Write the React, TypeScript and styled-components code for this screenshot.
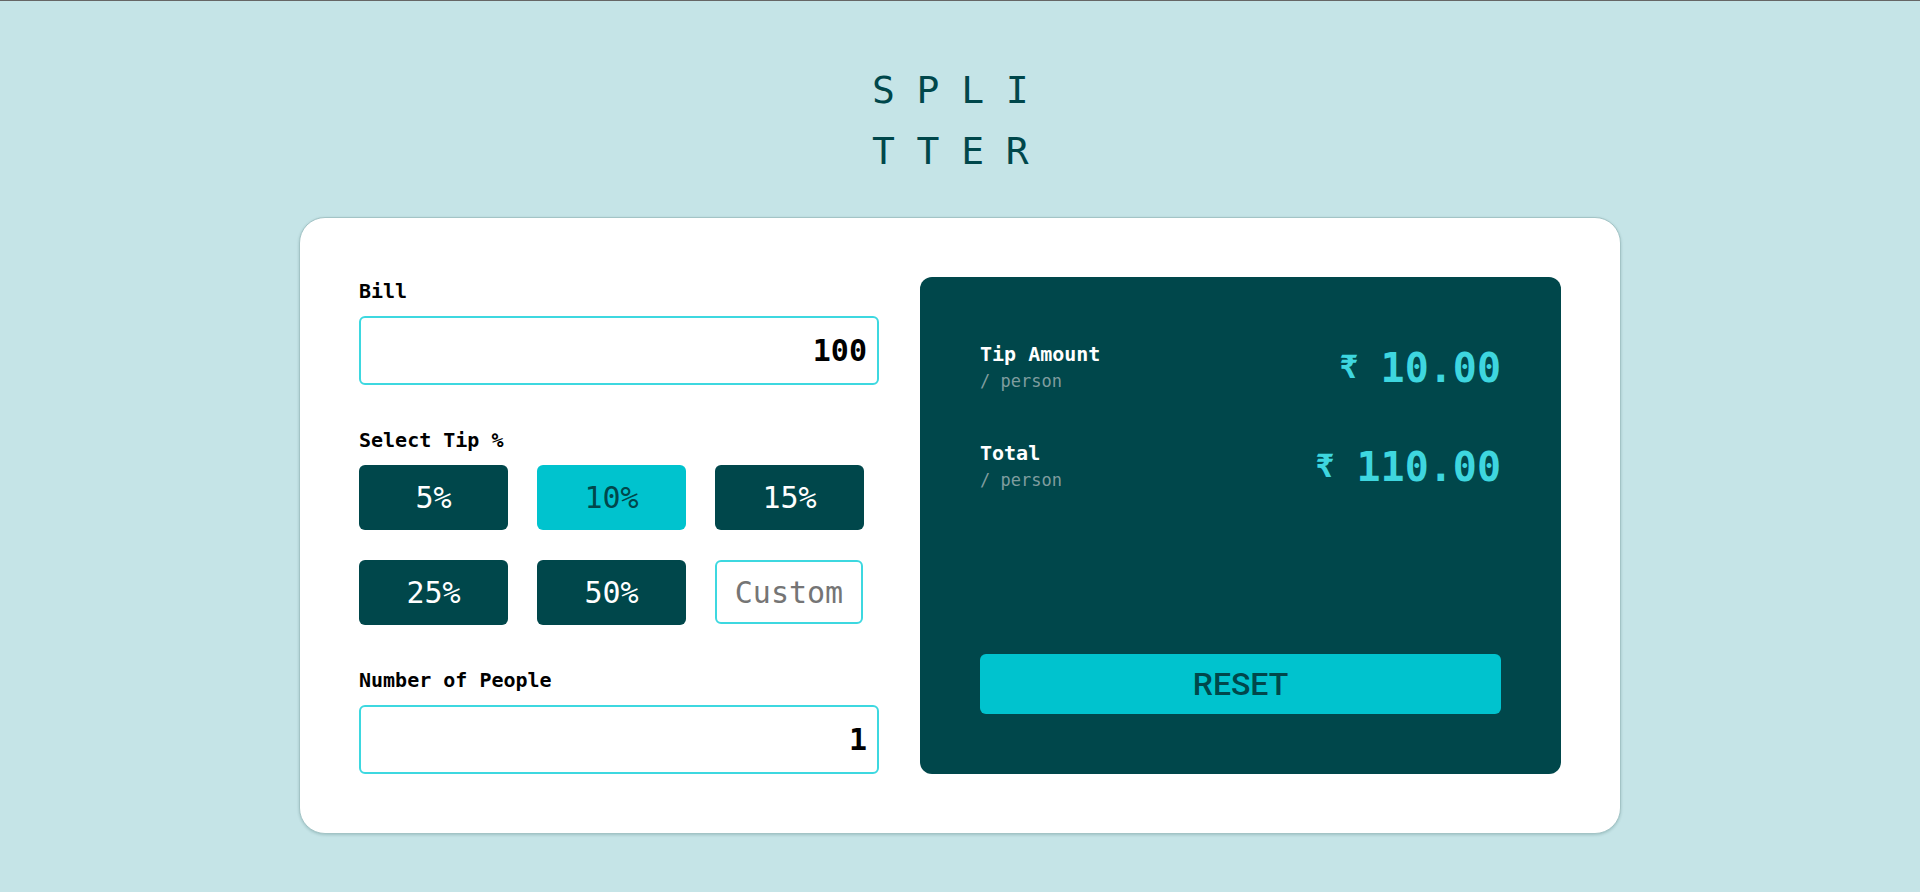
import React, { useState } from 'react'
import styled, { createGlobalStyle } from 'styled-components'

const GlobalStyle = createGlobalStyle`
  body {
    margin: 0;
    font-family: 'DejaVu Sans Mono', 'Liberation Mono', monospace;
  }
  * {
    box-sizing: border-box;
  }
`

const Page = styled.div`
  min-height: 100vh;
  background: #c5e4e7;
  border-top: 1px solid #666;
  padding-top: 59px;
  display: flex;
  flex-direction: column;
  align-items: center;
`

const Title = styled.h1`
  margin: 0 0 35px 6px;
  width: 182px;
  font-size: 38px;
  font-weight: 400;
  line-height: 61px;
  letter-spacing: 21.7px;
  word-break: break-all;
  color: #00474b;
`

const Card = styled.main`
  width: 1322px;
  background: #fff;
  border: 1px solid #a3c4c6;
  border-radius: 26px;
  box-shadow: 0 1px 3px rgba(0, 60, 60, 0.2);
  padding: 59px;
  display: grid;
  grid-template-columns: 520px 641px;
  column-gap: 41px;
`

const Form = styled.section`
  display: flex;
  flex-direction: column;
  gap: 41px;
`

const Field = styled.div`
  display: flex;
  flex-direction: column;
  gap: 10px;
`

const Label = styled.label`
  font-size: 20px;
  font-weight: 700;
  line-height: 29px;
  color: #000;
`

const NumberInput = styled.input`
  width: 100%;
  height: 69px;
  border: 2px solid #3dd8e0;
  border-radius: 6px;
  padding: 0 10px;
  text-align: right;
  font-family: inherit;
  font-size: 30px;
  font-weight: 700;
  color: #000;
  outline: none;
`

const TipGrid = styled.div`
  display: grid;
  grid-template-columns: repeat(3, 149px);
  column-gap: 29px;
  row-gap: 30px;
`

const TipButton = styled.button<{ active?: boolean }>`
  height: 65px;
  border: none;
  border-radius: 6px;
  background: ${({ active }) => (active ? '#00c3ce' : '#00474b')};
  color: ${({ active }) => (active ? '#00474b' : '#fff')};
  font-family: inherit;
  font-size: 30px;
  cursor: pointer;
`

const CustomInput = styled.input`
  width: 148px;
  height: 64px;
  border: 2px solid #3dd8e0;
  border-radius: 6px;
  text-align: center;
  font-family: inherit;
  font-size: 30px;
  color: #757575;
  outline: none;
  &::placeholder {
    color: #757575;
  }
`

const Result = styled.section`
  background: #00474b;
  border-radius: 12px;
  padding: 64px 60px 60px;
  display: flex;
  flex-direction: column;
  justify-content: space-between;
`

const Rows = styled.div`
  display: flex;
  flex-direction: column;
  gap: 45px;
`

const Row = styled.div`
  display: flex;
  justify-content: space-between;
  align-items: center;
`

const RowName = styled.div`
  font-size: 20px;
  font-weight: 700;
  line-height: 26px;
  color: #fff;
`

const RowSub = styled.div`
  font-size: 17px;
  line-height: 28px;
  color: #7f9d9f;
`

const Amount = styled.div`
  font-size: 40px;
  font-weight: 700;
  color: #3ed6df;
  display: flex;
  align-items: center;
`

const Rupee = styled.span`
  font-size: 32px;
  font-weight: 700;
  margin-right: 22px;
  margin-top: -2px;
`

const ResetButton = styled.button`
  height: 60px;
  border: none;
  border-radius: 6px;
  background: #00c3ce;
  color: #00474b;
  font-family: Roboto, 'Liberation Sans', sans-serif;
  font-size: 32px;
  font-weight: 500;
  cursor: pointer;
`

const tips = [5, 10, 15, 25, 50]

const App = () => {
  const [bill, setBill] = useState('100')
  const [people, setPeople] = useState('1')
  const [tip, setTip] = useState(10)

  const b = parseFloat(bill) || 0
  const p = parseInt(people) || 1
  const tipPer = (b * tip) / 100 / p
  const totalPer = b / p + tipPer

  return (
    <Page>
      <GlobalStyle />
      <Title>SPLITTER</Title>
      <Card>
        <Form>
          <Field>
            <Label>Bill</Label>
            <NumberInput value={bill} onChange={(e) => setBill(e.target.value)} />
          </Field>
          <Field>
            <Label>Select Tip %</Label>
            <TipGrid>
              {tips.map((t) => (
                <TipButton key={t} active={t === tip} onClick={() => setTip(t)}>
                  {t}%
                </TipButton>
              ))}
              <CustomInput placeholder="Custom" />
            </TipGrid>
          </Field>
          <Field>
            <Label>Number of People</Label>
            <NumberInput value={people} onChange={(e) => setPeople(e.target.value)} />
          </Field>
        </Form>
        <Result>
          <Rows>
            <Row>
              <div>
                <RowName>Tip Amount</RowName>
                <RowSub>/ person</RowSub>
              </div>
              <Amount>
                <Rupee>₹</Rupee>
                {tipPer.toFixed(2)}
              </Amount>
            </Row>
            <Row>
              <div>
                <RowName>Total</RowName>
                <RowSub>/ person</RowSub>
              </div>
              <Amount>
                <Rupee>₹</Rupee>
                {totalPer.toFixed(2)}
              </Amount>
            </Row>
          </Rows>
          <ResetButton onClick={() => setTip(10)}>RESET</ResetButton>
        </Result>
      </Card>
    </Page>
  )
}

export default App
